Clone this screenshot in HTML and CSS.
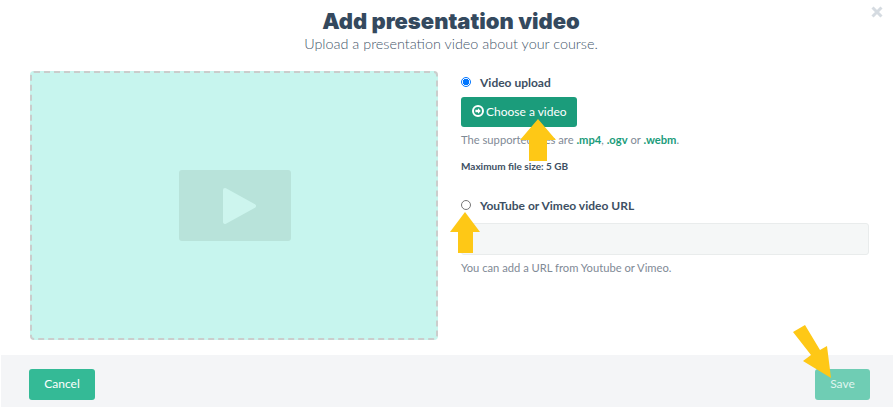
FILE: index.html
```html
<!DOCTYPE html>
<html lang="en">
  <head>
    <meta charset="UTF-8" />
    <meta name="viewport" content="width=device-width, initial-scale=1.0" />
    <title>Add presentation video</title>
    <link rel="stylesheet" href="styles.css">
  </head>
  <body>
    <div class="modal">
      <svg class="close" width="12" height="12" viewBox="0 0 12 12">
        <path d="M1.5 1.5l9 9M10.5 1.5l-9 9" stroke="#d5dbe1" stroke-width="3" />
      </svg>

      <div class="header">
        <h1>Add presentation video</h1>
        <p>Upload a presentation video about your course.</p>
      </div>

      <div class="content">
        <div class="preview">
          <div class="player">
            <svg width="36" height="40" viewBox="0 0 36 40">
              <path d="M3 4l29 16L3 36z" fill="#cdf5ee" stroke="#cdf5ee" stroke-width="4" stroke-linejoin="round" />
            </svg>
          </div>
        </div>

        <form class="options">
          <label class="option">
            <input type="radio" name="source" checked />
            <span>Video upload</span>
          </label>
          <button type="button" class="choose">
            <svg width="12" height="12" viewBox="0 0 12 12">
              <circle cx="6" cy="6" r="5" fill="none" stroke="#fff" stroke-width="2" />
              <path d="M6 3.2L8.8 6H7.2v2.6H4.8V6H3.2z" fill="#fff" transform="rotate(90 6 6)" />
            </svg>
            Choose a video
          </button>
          <p class="hint">The supported files are <b>.mp4</b>, <b>.ogv</b> or <b>.webm</b>.</p>
          <p class="limit">Maximum file size: 5 GB</p>

          <label class="option second">
            <input type="radio" name="source" />
            <span>YouTube or Vimeo video URL</span>
          </label>
          <input type="text" class="url" />
          <p class="hint">You can add a URL from Youtube or Vimeo.</p>
        </form>
      </div>

      <div class="footer">
        <button type="button" class="btn cancel">Cancel</button>
        <button type="button" class="btn save">Save</button>
      </div>

      <!-- Annotation arrows on top of the screenshot -->
      <svg class="arrow arrow-choose" width="36" height="42" viewBox="0 0 36 42">
        <path d="M18 0l18 21H27v21H9V21H0z" fill="#fec816" />
      </svg>
      <svg class="arrow arrow-radio" width="30" height="41" viewBox="0 0 30 41">
        <path d="M15 0l15 20H23v21H8V20H0z" fill="#fec816" />
      </svg>
      <svg class="arrow arrow-save" width="40" height="54" viewBox="0 0 40 54">
        <path d="M0 7L12 0l15 25 7-4 4 32-28-17 8-6z" fill="#fec816" />
      </svg>
    </div>
  </body>
</html>
```

FILE: styles.css
```css
body {
  font-family: "Lato", "Open Sans", sans-serif;
  background-color: white;
  color: #34495e;
  margin: 0;
}

.modal {
  position: relative;
  width: 893px;
  height: 407px;
  overflow: hidden;
}

.close {
  position: absolute;
  top: 6px;
  right: 10px;
}

.header {
  height: 71px;
  padding-left: 9px;
  text-align: center;
}

h1 {
  margin: 0;
  padding-top: 7px;
  font-family: "Inter", "Lato", sans-serif;
  font-size: 22px;
  line-height: 28px;
  font-weight: 900;
  color: #34495e;
}

.header p {
  margin: 0;
  font-size: 14.4px;
  line-height: 18px;
  font-weight: 300;
  color: #45566a;
}

.content {
  display: flex;
  gap: 23px;
  height: 284px;
  padding: 0 24px 0 30px;
}

.preview {
  width: 404px;
  height: 265px;
  background-color: #c7f5ee;
  border: 2px dashed #cbcdcc;
  border-radius: 4px;
  display: flex;
  justify-content: center;
  align-items: center;
}

.player {
  box-sizing: border-box;
  width: 112px;
  height: 71px;
  margin-left: 2px;
  padding-left: 10px;
  background-color: #b8e3da;
  border-radius: 3px;
  display: flex;
  justify-content: center;
  align-items: center;
}

.options {
  flex: 1;
}

.option {
  display: flex;
  align-items: center;
  gap: 9px;
  height: 16px;
  margin-top: 3px;
  font-size: 12px;
  font-weight: 700;
  color: #3d4f63;
}

.option input {
  appearance: none;
  box-sizing: border-box;
  width: 10px;
  height: 10px;
  margin: 0;
  background-color: white;
  border: 1px solid #767676;
  border-radius: 50%;
}

.option input:checked {
  border-color: #0075ff;
  background: radial-gradient(circle, #0075ff 3px, white 3.5px);
}

.second {
  margin-top: 24px;
}

.choose {
  display: flex;
  align-items: center;
  gap: 2px;
  width: 116px;
  height: 30px;
  margin-top: 7px;
  padding: 0 0 2px 11px;
  background-color: #1b9c7b;
  color: white;
  border: none;
  border-radius: 3px;
  font-family: inherit;
  font-size: 12px;
  font-weight: 400;
}

.hint {
  margin: 6px 0 0;
  font-size: 11.2px;
  line-height: 14px;
  color: #7f8a96;
}

.hint b {
  color: #1b9c7b;
  font-weight: 700;
}

.limit {
  margin: 12px 0 0;
  font-size: 10px;
  line-height: 14px;
  font-weight: 700;
  color: #3d4f63;
}

.url {
  display: block;
  box-sizing: border-box;
  width: 408px;
  height: 32px;
  margin: 10px 0 0;
  background-color: #f5f7f7;
  border: 1px solid #e9ecec;
  border-radius: 3px;
}

.url + .hint {
  margin-top: 6px;
}

.footer {
  display: flex;
  justify-content: space-between;
  align-items: flex-start;
  box-sizing: border-box;
  height: 52px;
  margin-left: 1px;
  padding: 14px 23px 0 28px;
  background-color: #f4f5f7;
}

.btn {
  height: 31px;
  padding: 0 0 2px;
  color: white;
  border: none;
  border-radius: 3px;
  font-family: inherit;
  font-size: 12px;
}

.cancel {
  width: 66px;
  background-color: #34ba96;
}

.save {
  width: 55px;
  background-color: #6fcdb4;
  color: #dff5ef;
}

.arrow {
  position: absolute;
}

.arrow-choose {
  left: 520px;
  top: 119px;
}

.arrow-radio {
  left: 450px;
  top: 212px;
}

.arrow-save {
  left: 793px;
  top: 325px;
}
```
